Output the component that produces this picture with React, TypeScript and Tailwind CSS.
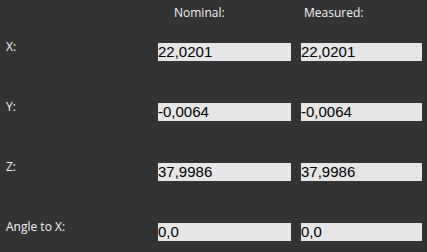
const rows = [
  { label: 'X:', nominal: '22,0201', measured: '22,0201' },
  { label: 'Y:', nominal: '-0,0064', measured: '-0,0064' },
  { label: 'Z:', nominal: '37,9986', measured: '37,9986' },
  { label: 'Angle to X:', nominal: '0,0', measured: '0,0' },
];

const labelFont = { fontFamily: '"Open Sans", "Noto Sans", sans-serif' };
const valueFont = { fontFamily: '"Liberation Sans", Arial, sans-serif' };

function ValueBox({ value, width }: { value: string; width: string }) {
  return (
    <div
      className={`${width} h-[18px] bg-[#e6e6e6] text-black text-[15px] leading-[18px] whitespace-nowrap overflow-hidden`}
      style={valueFont}
    >
      {value}
    </div>
  );
}

export default function App() {
  return (
    <div className="w-[427px] h-[252px] bg-[#333333] text-[#f2f2f2] overflow-hidden" style={labelFont}>
      <div className="flex h-[43px] pt-[5px] text-[12px] leading-[16px]">
        <div className="w-[174px]" />
        <div className="w-[130px]">Nominal:</div>
        <div>Measured:</div>
      </div>
      {rows.map((row) => (
        <div key={row.label} className="flex items-start h-[60px] pl-[6px]">
          <div className="w-[152px] text-[12px] leading-[12px] mt-[-2px]">{row.label}</div>
          <ValueBox value={row.nominal} width="w-[133px]" />
          <div className="w-[10px]" />
          <ValueBox value={row.measured} width="w-[121px]" />
        </div>
      ))}
    </div>
  );
}
